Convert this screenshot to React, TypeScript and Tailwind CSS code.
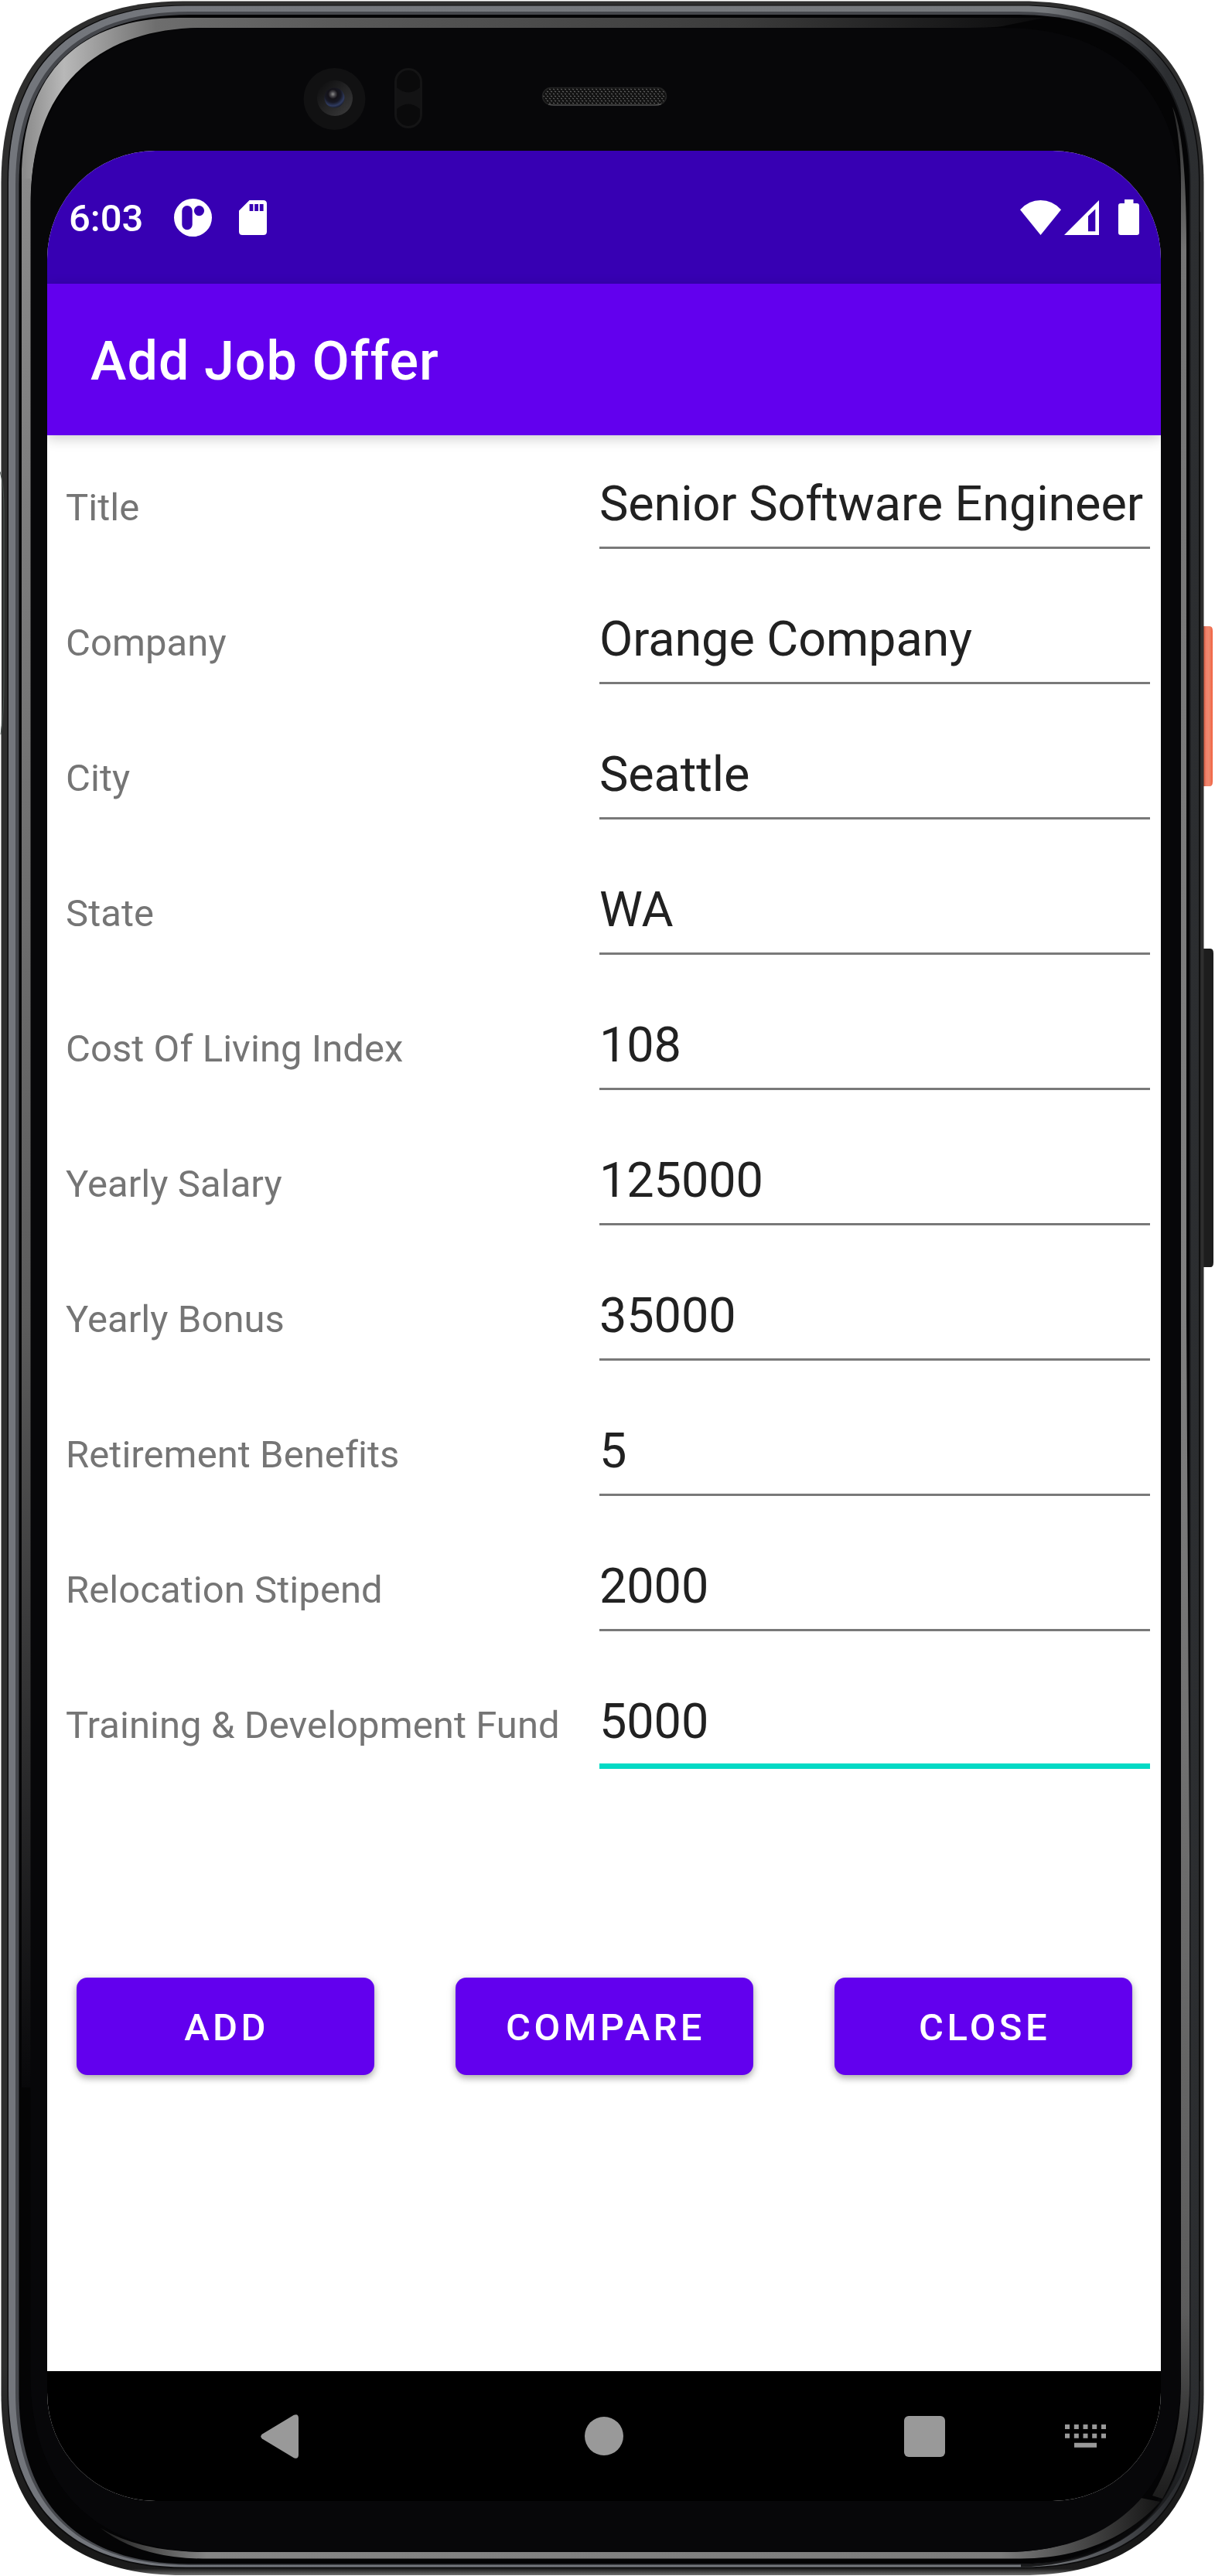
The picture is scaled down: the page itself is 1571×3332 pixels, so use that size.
import type { ReactNode } from "react";

const fields = [
  { label: "Title", value: "Senior Software Engineer" },
  { label: "Company", value: "Orange Company" },
  { label: "City", value: "Seattle" },
  { label: "State", value: "WA" },
  { label: "Cost Of Living Index", value: "108" },
  { label: "Yearly Salary", value: "125000" },
  { label: "Yearly Bonus", value: "35000" },
  { label: "Retirement Benefits", value: "5" },
  { label: "Relocation Stipend", value: "2000" },
  { label: "Training & Development Fund", value: "5000", focused: true },
];

/** Rounded outline with softened corners, used for each ring of the handset. */
function ring(l: number, t: number, r: number, b: number, R: number, k = 0.65) {
  const h = R * (1 - k);
  return `M${l + R} ${t}H${r - R}C${r - h} ${t} ${r} ${t + h} ${r} ${t + R}V${b - R}C${r} ${b - h} ${r - h} ${b} ${r - R} ${b}H${l + R}C${l + h} ${b} ${l} ${b - h} ${l} ${b - R}V${t + R}C${l} ${t + h} ${l + h} ${t} ${l + R} ${t}Z`;
}

function Handset() {
  return (
    <svg className="absolute inset-0" width="1571" height="3332" viewBox="0 0 1571 3332" fill="none">
      <defs>
        <linearGradient id="power" x1="1556" x2="1568" y1="0" y2="0" gradientUnits="userSpaceOnUse">
          <stop offset="0" stopColor="#c8553b" />
          <stop offset="0.3" stopColor="#f0806a" />
          <stop offset="0.6" stopColor="#ee8a70" />
          <stop offset="1" stopColor="#f2603f" />
        </linearGradient>
        <linearGradient id="body" x1="0" x2="0" y1="3060" y2="3332" gradientUnits="userSpaceOnUse">
          <stop offset="0" stopColor="#2e2e2e" />
          <stop offset="0.8" stopColor="#161616" />
          <stop offset="0.965" stopColor="#1c1c1c" />
          <stop offset="1" stopColor="#7a7a7a" />
        </linearGradient>
        <linearGradient id="metal" x1="0" x2="1571" y1="0" y2="0" gradientUnits="userSpaceOnUse">
          <stop offset="0" stopColor="#73767c" />
          <stop offset="0.86" stopColor="#76797d" />
          <stop offset="0.92" stopColor="#4a4c50" />
          <stop offset="0.96" stopColor="#2c2e31" />
          <stop offset="1" stopColor="#2b2d2f" />
        </linearGradient>
        <linearGradient id="metalInner" x1="0" x2="1571" y1="0" y2="0" gradientUnits="userSpaceOnUse">
          <stop offset="0" stopColor="#45474c" />
          <stop offset="0.86" stopColor="#45474c" />
          <stop offset="0.96" stopColor="#17181a" />
          <stop offset="1" stopColor="#17181a" />
        </linearGradient>
        <linearGradient id="bottomShade" x1="0" x2="0" y1="3120" y2="3322" gradientUnits="userSpaceOnUse">
          <stop offset="0" stopColor="#0a0a0b" stopOpacity="0" />
          <stop offset="1" stopColor="#0a0a0b" stopOpacity="0.85" />
        </linearGradient>
        <linearGradient id="topGlint" x1="30" x2="1350" y1="0" y2="0" gradientUnits="userSpaceOnUse">
          <stop offset="0" stopColor="#8a8a8a" />
          <stop offset="0.04" stopColor="#b8b8b8" />
          <stop offset="0.13" stopColor="#6e6e6e" />
          <stop offset="0.3" stopColor="#5a5a5a" />
          <stop offset="0.7" stopColor="#3c3c3c" />
          <stop offset="1" stopColor="#0a0a0b" />
        </linearGradient>
        <linearGradient id="leftGlint" x1="0" x2="0" y1="230" y2="2700" gradientUnits="userSpaceOnUse">
          <stop offset="0" stopColor="#8a8a8a" />
          <stop offset="0.25" stopColor="#787878" />
          <stop offset="0.6" stopColor="#5c5c5c" />
          <stop offset="1" stopColor="#08080a" />
        </linearGradient>
        <linearGradient id="rightGlint" x1="0" x2="0" y1="140" y2="3240" gradientUnits="userSpaceOnUse">
          <stop offset="0" stopColor="#2a2a2a" />
          <stop offset="0.06" stopColor="#747474" />
          <stop offset="0.5" stopColor="#808080" />
          <stop offset="0.92" stopColor="#5c5c5c" />
          <stop offset="1" stopColor="#1a1a1a" />
        </linearGradient>
        <linearGradient id="bottomGlint" x1="130" x2="1500" y1="0" y2="0" gradientUnits="userSpaceOnUse">
          <stop offset="0" stopColor="#1a1a1a" />
          <stop offset="0.1" stopColor="#858585" />
          <stop offset="0.85" stopColor="#7c7c7c" />
          <stop offset="1" stopColor="#151515" />
        </linearGradient>
        <radialGradient id="lens" cx="0.42" cy="0.32" r="0.68">
          <stop offset="0" stopColor="#8c8c8c" />
          <stop offset="0.18" stopColor="#454348" />
          <stop offset="0.35" stopColor="#141218" />
          <stop offset="0.6" stopColor="#171824" />
          <stop offset="0.85" stopColor="#2f3b60" />
          <stop offset="1" stopColor="#1b1f30" />
        </radialGradient>
        <linearGradient id="lensRim" x1="0" x2="1" y1="0" y2="1">
          <stop offset="0" stopColor="#0b0b0c" />
          <stop offset="1" stopColor="#3c3c3d" />
        </linearGradient>
        <pattern id="mesh" width="5" height="6" patternUnits="userSpaceOnUse">
          <rect width="5" height="6" fill="#121212" />
          <path d="M0 1l2 1M2 4l2 1" stroke="#666" strokeWidth="1.100" />
        </pattern>
      </defs>

      {/* side keys */}
      <path d="M1554 810h10q4 0 4 6v195q0 6-4 6h-10z" fill="url(#power)" />
      <path d="M1554 1227h11q4 0 4 6v400q0 6-4 6h-11z" fill="#1d1d1d" />

      {/* body rings */}
      <path d={ring(1.5, 1.5, 1556.5, 3331, 235)} fill="url(#body)" />
      <path d={ring(9.5, 6.5, 1551.5, 3322, 230)} fill="#0c0c0d" />
      <path d={ring(11, 7.5, 1550, 3320.5, 229)} fill="url(#metal)" />
      <path d={ring(20, 15, 1539.5, 3318, 224)} fill="url(#metalInner)" />
      <path d={ring(24.5, 19, 1538, 3316.5, 221)} fill="#040405" />
      <path d="M1470 3120H1571V3332H1300V3322C1400 3322 1470 3240 1470 3120Z" fill="none" />
      <path d="M1538 3100H1550C1550 3222 1466 3317 1320 3320.500V3316.500C1454 3316 1538 3222 1538 3100Z" fill="url(#bottomShade)" />
      <path d="M1551.500 300V3080" stroke="#111" strokeWidth="1.500" />

      {/* light reflections between the rim and the glass */}
      <path d="M28 232C28 92 106 23 232 23H1350L1300 33Q1290 36 1240 36H262C142 36 40 98 40 262Z" fill="url(#topGlint)" />
      <path d="M28 231H40V2700H28Z" fill="url(#leftGlint)" />
      <path d="M1516 138Q1534 175 1534 320V1700L1538 2400V3085Q1538 3170 1503 3232L1490 3228Q1527 3165 1527 3085V240Q1527 180 1516 138Z" fill="url(#rightGlint)" />
      <path d="M130 3270Q180 3309 262 3309.500H1320C1400 3309 1460 3280 1500 3236L1470 3230C1430 3275 1380 3301 1300 3301H260Q180 3300 130 3270Z" fill="url(#bottomGlint)" />

      {/* glass */}
      <path d={ring(39.5, 36, 1527, 3301, 228, 0.63)} fill="#070709" />

      {/* antenna band on the left rim */}
      <path d="M0 610Q2 612 2 640V920Q2 940 0 950Z" fill="#fff" />
      <path d="M0 610Q5 625 5 660V880Q5 925 1 950" stroke="#4a5350" strokeWidth="1" />

      {/* front camera */}
      <circle cx="432.500" cy="128" r="40" fill="#111112" />
      <circle cx="433" cy="127" r="23" fill="url(#lensRim)" />
      <circle cx="432.500" cy="126.500" r="13" fill="url(#lens)" />

      {/* proximity sensors */}
      <rect x="511.500" y="89.500" width="33" height="75" rx="16.500" fill="#0a0a0b" stroke="#141415" strokeWidth="3" />
      <path d="M513 113Q528 126 543 113V141Q528 128 513 141Z" fill="#131314" />

      {/* earpiece */}
      <rect x="701.500" y="113.500" width="160" height="22" rx="11" fill="url(#mesh)" stroke="#222" strokeWidth="1.500" />
      <path d="M709 135Q712 136 716 136H847Q852 136 855 134.500" stroke="#666" strokeWidth="1.200" />
    </svg>
  );
}

function StatusBar() {
  return (
    <div className="flex h-[172px] shrink-0 items-center bg-[#3700b3] pl-7 pr-7 text-white">
      <span className="w-[116px] pt-[3px] text-[49px] leading-[58px] font-medium">6:03</span>
      <svg className="ml-5" width="49" height="49" viewBox="0 0 49 49">
        <path
          fillRule="evenodd"
          fill="#fff"
          d="M24.500 0a24.500 24.500 0 1 0 0 49a24.500 24.500 0 1 0 0-49ZM17 9a6.700 6.700 0 0 1 6.700 6.700V33.500a6.700 6.700 0 0 1-13.400 0V15.700A6.700 6.700 0 0 1 17 9ZM32.500 9a6.600 6.600 0 1 1 0 13.200a6.600 6.600 0 1 1 0-13.200Z"
        />
      </svg>
      <svg className="ml-[34.500px]" width="36" height="45" viewBox="0 0 36 45">
        <path
          fillRule="evenodd"
          fill="#fff"
          d="M13.500 0H31.500Q36 0 36 4.500V40.500Q36 45 31.500 45H4.500Q0 45 0 40.500V13.500ZM13.600 5V14H18.400V5ZM20.200 5V14H25V5ZM26.800 5V14H31.600V5Z"
        />
      </svg>
      <div className="ml-auto flex items-center">
        <svg width="53" height="45" viewBox="0 0 53 45">
          <path fill="#fff" d="M0 12.300Q11 0 26.500 0T53 12.300L26.500 45Z" />
        </svg>
        <svg className="ml-1" width="45" height="45" viewBox="0 0 45 45">
          <path fillRule="evenodd" fill="#fff" d="M45 0V45H0ZM40.300 11.500L31 20.500V40.200H40.300Z" />
        </svg>
        <svg className="ml-[25px]" width="27" height="46" viewBox="0 0 27 46">
          <path fill="#fff" d="M8 0H19.500V5H24Q27 5 27 8V43Q27 46 24 46H3Q0 46 0 43V8Q0 5 3 5H8Z" />
        </svg>
      </div>
    </div>
  );
}

function Button({ children }: { children: ReactNode }) {
  return (
    <button
      type="button"
      className="h-[126px] w-[385px] rounded-[14px] bg-[#6200ee] pt-[3px] pl-[3px] text-[49px] font-medium tracking-[4.375px] text-white shadow-[0_4px_8px_rgba(0,0,0,0.28),0_2px_14px_rgba(0,0,0,0.1)]"
    >
      {children}
    </button>
  );
}

function NavBar() {
  return (
    <div className="flex h-[168px] shrink-0 items-center bg-black pl-[276px] pr-[70px]">
      <svg width="49" height="57" viewBox="0 0 49 57">
        <path fill="#999" d="M2 25.500L43 .8Q49-1.500 49 5V52Q49 58.500 43 56.200L2 31.500Q-1.500 28.500 2 25.500Z" />
      </svg>
      <span className="ml-[370px] size-[50px] rounded-full bg-[#999]" />
      <span className="ml-[363px] size-[53px] rounded-[6px] bg-[#999]" />
      <svg className="ml-auto" width="54" height="30" viewBox="0 0 54 30">
        <path
          fill="#999"
          d="M0 0h6v6h-6zM11.800 0h6v6h-6zM23.500 0h6v6h-6zM35.200 0h6v6h-6zM47 0h6v6h-6zM0 11.800h6v6h-6zM11.800 11.800h6v6h-6zM23.500 11.800h6v6h-6zM35.200 11.800h6v6h-6zM47 11.800h6v6h-6zM12 23.700h29v6h-29z"
        />
      </svg>
    </div>
  );
}

export default function App() {
  return (
    <div className="relative h-[3332px] w-[1571px] overflow-hidden bg-white pt-[195px] pl-[61px] font-['Roboto',sans-serif]">
      <Handset />
      <div className="relative flex h-[3040px] w-[1440px] flex-col overflow-hidden rounded-[140px] bg-white">
        <StatusBar />
        <header className="relative flex h-[196px] shrink-0 items-center bg-[#6200ee] pt-1 pl-14 shadow-[0_4px_16px_rgba(0,0,0,0.2)]">
          <h1 className="text-[70px] leading-[82px] font-medium tracking-[1.05px] text-white">Add Job Offer</h1>
        </header>
        <main className="flex-1 pt-[52px]">
          {fields.map((f) => (
            <div key={f.label} className="flex h-[175px] items-baseline pl-6">
              <span className="w-[690px] text-[49px] leading-[58px] tracking-[0.06px] whitespace-nowrap text-[#757575]">
                {f.label}
              </span>
              <span
                className={
                  f.focused
                    ? "w-[712px] border-b-[7px] border-[#03dac5] pb-[17px] text-[63px] leading-[74px] tracking-[-0.1px] whitespace-nowrap text-[#212121]"
                    : "w-[712px] border-b-[3px] border-[#797979] pb-[18px] text-[63px] leading-[74px] tracking-[-0.1px] whitespace-nowrap text-[#212121]"
                }
              >
                {f.value}
              </span>
            </div>
          ))}
          <div className="mt-[193px] flex gap-[105px] pl-[38px]">
            <Button>ADD</Button>
            <Button>COMPARE</Button>
            <Button>CLOSE</Button>
          </div>
        </main>
        <NavBar />
      </div>
    </div>
  );
}
